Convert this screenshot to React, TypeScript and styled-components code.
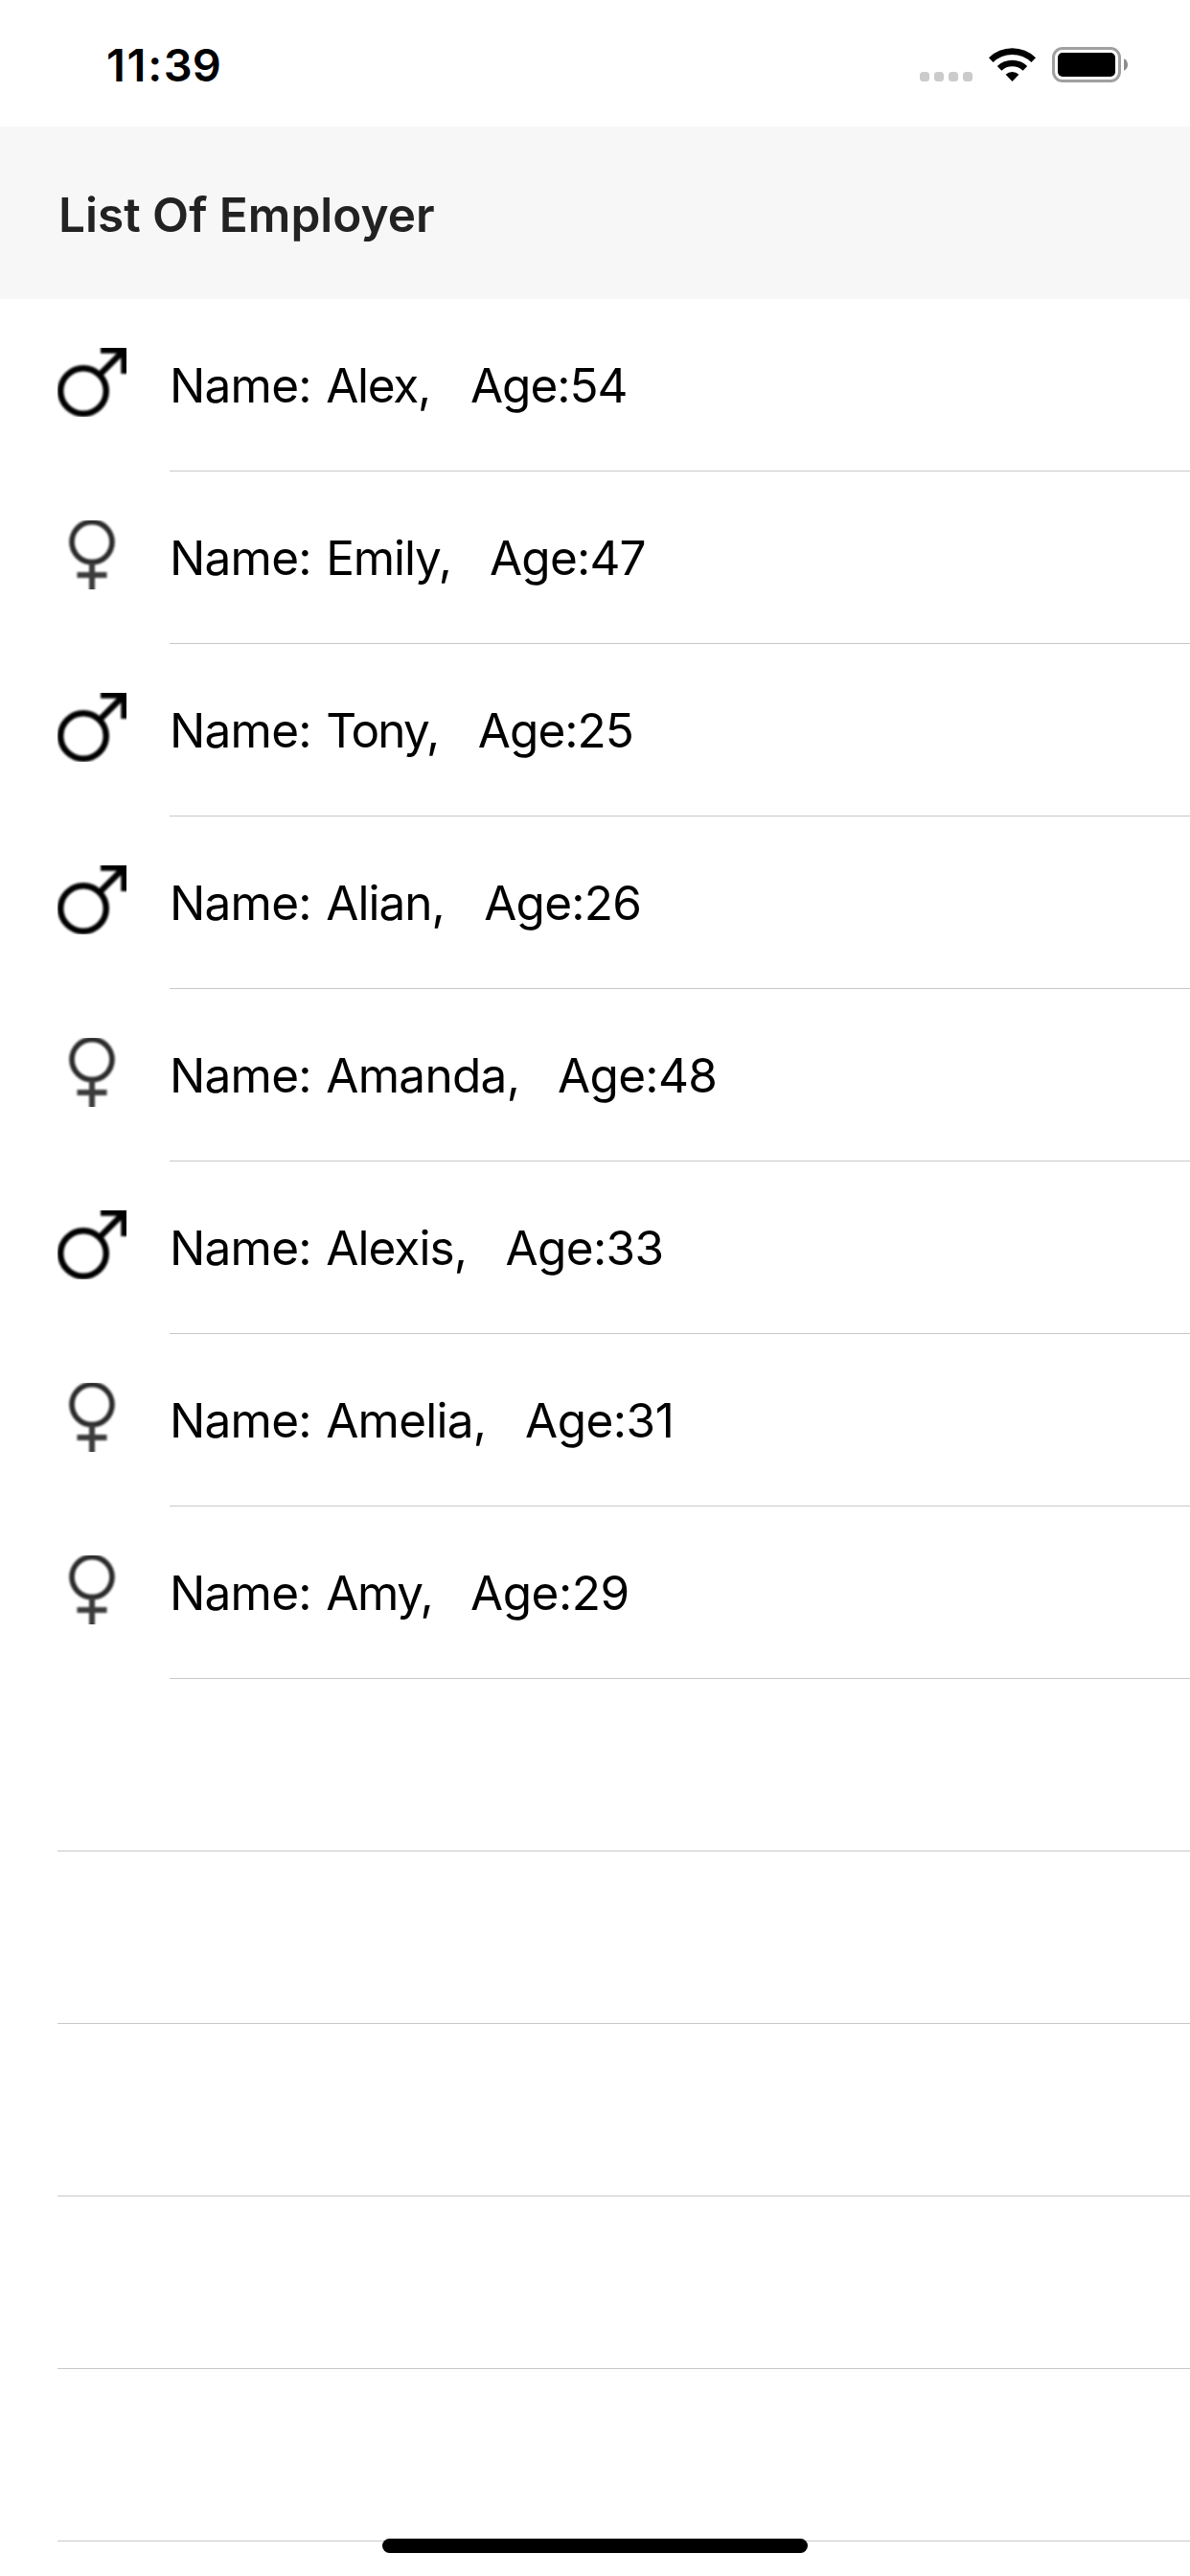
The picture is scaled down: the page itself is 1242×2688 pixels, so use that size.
import React from "react";
import styled, { createGlobalStyle } from "styled-components";

const GlobalStyle = createGlobalStyle`
  * { box-sizing: border-box; }
  body {
    margin: 0;
    background: #fff;
    color: #000;
    font-family: Inter, "Liberation Sans", sans-serif;
  }
`;

const Screen = styled.div`
  position: relative;
  display: flex;
  flex-direction: column;
  width: 1242px;
  height: 2688px;
  overflow: hidden;
  background: #fff;
`;

const StatusBar = styled.div`
  display: flex;
  justify-content: space-between;
  align-items: flex-start;
  height: 132px;
  padding: 46px 65px 0 111px;
`;

const Time = styled.time`
  font-size: 47px;
  line-height: 44px;
  font-weight: 600;
`;

const Hours = styled.span`
  letter-spacing: 1.7px;
`;

const StatusIcons = styled.div`
  display: flex;
  align-items: flex-start;
  padding-top: 3px;
`;

const SignalDots = styled.div`
  display: flex;
  gap: 5px;
  margin: 26px 17px 0 0;
`;

const Dot = styled.i`
  width: 10px;
  height: 10px;
  border-radius: 3.5px;
  background: #cbcbcb;
`;

const WifiSvg = styled.svg`
  display: block;
  margin-right: 17px;
`;

const BatterySvg = styled.svg`
  display: block;
`;

const SectionHeader = styled.header`
  display: flex;
  align-items: center;
  height: 180px;
  padding: 4px 61px 0;
  background: #f7f7f7;
`;

const Title = styled.h1`
  margin: 0;
  color: #222;
  font-size: 49.5px;
  line-height: 60px;
  font-weight: 600;
`;

const List = styled.ul`
  margin: 0;
  padding: 0;
  list-style: none;
`;

const Row = styled.li`
  display: flex;
  align-items: center;
  height: 180px;
  padding-left: 60px;
`;

const Icon = styled.svg`
  flex: none;
  display: block;
  margin: -6px 45px 0 0;
  overflow: hidden;
`;

const RowBody = styled.div`
  flex: 1;
  display: flex;
  align-items: center;
  height: 180px;
  padding-top: 1px;
  border-bottom: 1px solid #c8c8ca;
  font-size: 49.5px;
  line-height: 60px;
  white-space: pre;
`;

const Label = styled.span`
  width: 163.2px;
  letter-spacing: -0.75px;
`;

const Name = styled.span<{ $width: number; $tracking: number }>`
  width: ${(p) => p.$width}px;
  letter-spacing: ${(p) => p.$tracking}px;
`;

const Age = styled.span<{ $tracking: number }>`
  letter-spacing: ${(p) => p.$tracking}px;
`;

const HomeIndicator = styled.div`
  position: absolute;
  left: 399px;
  bottom: 24px;
  width: 444px;
  height: 15px;
  border-radius: 7.5px;
  background: #000;
`;

type Gender = "male" | "female";

interface Employer {
  name: string;
  age: number;
  gender: Gender;
  width: number;
  nameTracking: number;
  ageTracking: number;
}

const employers: Employer[] = [
  { name: "Alex", age: 54, gender: "male", width: 150.7, nameTracking: -1.3, ageTracking: -1 },
  { name: "Emily", age: 47, gender: "female", width: 170.8, nameTracking: -1.1, ageTracking: -0.8 },
  { name: "Tony", age: 25, gender: "male", width: 158.6, nameTracking: -1.8, ageTracking: -0.95 },
  { name: "Alian", age: 26, gender: "male", width: 165, nameTracking: -0.95, ageTracking: -0.75 },
  { name: "Amanda", age: 48, gender: "female", width: 241.9, nameTracking: -0.7, ageTracking: -0.7 },
  { name: "Alexis", age: 33, gender: "male", width: 187.2, nameTracking: -0.9, ageTracking: -0.6 },
  { name: "Amelia", age: 31, gender: "female", width: 207.8, nameTracking: -0.75, ageTracking: -0.5 },
  { name: "Amy", age: 29, gender: "female", width: 150.8, nameTracking: -1.4, ageTracking: -0.45 },
];

const emptyRows = [0, 1, 2, 3, 4];

const SoftGroup = styled.g`
  filter: blur(0.8px);
`;

function GenderIcon({ gender }: { gender: Gender }) {
  return (
    <Icon width="72" height="72" viewBox="0 0 72 72" fill="none">
      {gender === "male" ? (
        <SoftGroup stroke="#000" strokeWidth="6.4">
          <circle cx="27" cy="45" r="23.8" />
          <path d="M44 28 68 4" />
          <path d="M45 2H70V27" strokeWidth="7.5" />
        </SoftGroup>
      ) : (
        <SoftGroup stroke="#2b2b2b" strokeWidth="5.6">
          <circle cx="36" cy="22.6" r="21" />
          <path d="M36 44V76M20.5 57H51.5" stroke="#3c3c3c" strokeWidth="6" />
        </SoftGroup>
      )}
    </Icon>
  );
}

function Wifi() {
  return (
    <WifiSvg width="49" height="37" viewBox="0 0 49 37">
      <path d="M0 11.2A35 35 0 0 1 49 11.2L44.4 16A28.6 28.6 0 0 0 4.6 16Z" />
      <path d="M8.8 20A22.6 22.6 0 0 1 40.2 20L35.6 24.7A16 16 0 0 0 13.4 24.7Z" />
      <path d="M17.6 28.8A10 10 0 0 1 31.4 28.8L24.5 36Z" />
    </WifiSvg>
  );
}

function Battery() {
  return (
    <BatterySvg width="79" height="37" viewBox="0 0 79 37">
      <rect x="1.5" y="1.5" width="69" height="34" rx="9.5" fill="none" stroke="#a0a0a0" strokeWidth="3" />
      <rect x="6" y="6" width="60" height="25" rx="5" />
      <path d="M75 12.2C77.6 13.2 79 15.6 79 18.5S77.6 23.8 75 24.8Z" fill="#8c8c8c" />
    </BatterySvg>
  );
}

export default function App() {
  return (
    <Screen>
      <GlobalStyle />
      <StatusBar>
        <Time>
          <Hours>11:</Hours>39
        </Time>
        <StatusIcons>
          <SignalDots>
            <Dot />
            <Dot />
            <Dot />
            <Dot />
          </SignalDots>
          <Wifi />
          <Battery />
        </StatusIcons>
      </StatusBar>
      <SectionHeader>
        <Title>List Of Employer</Title>
      </SectionHeader>
      <List>
        {employers.map((e) => (
          <Row key={e.name}>
            <GenderIcon gender={e.gender} />
            <RowBody>
              <Label>{"Name: "}</Label>
              <Name $width={e.width} $tracking={e.nameTracking}>{`${e.name},   `}</Name>
              <Age $tracking={e.ageTracking}>{`Age:${e.age}`}</Age>
            </RowBody>
          </Row>
        ))}
        {emptyRows.map((n) => (
          <Row key={n}>
            <RowBody />
          </Row>
        ))}
      </List>
      <HomeIndicator />
    </Screen>
  );
}
